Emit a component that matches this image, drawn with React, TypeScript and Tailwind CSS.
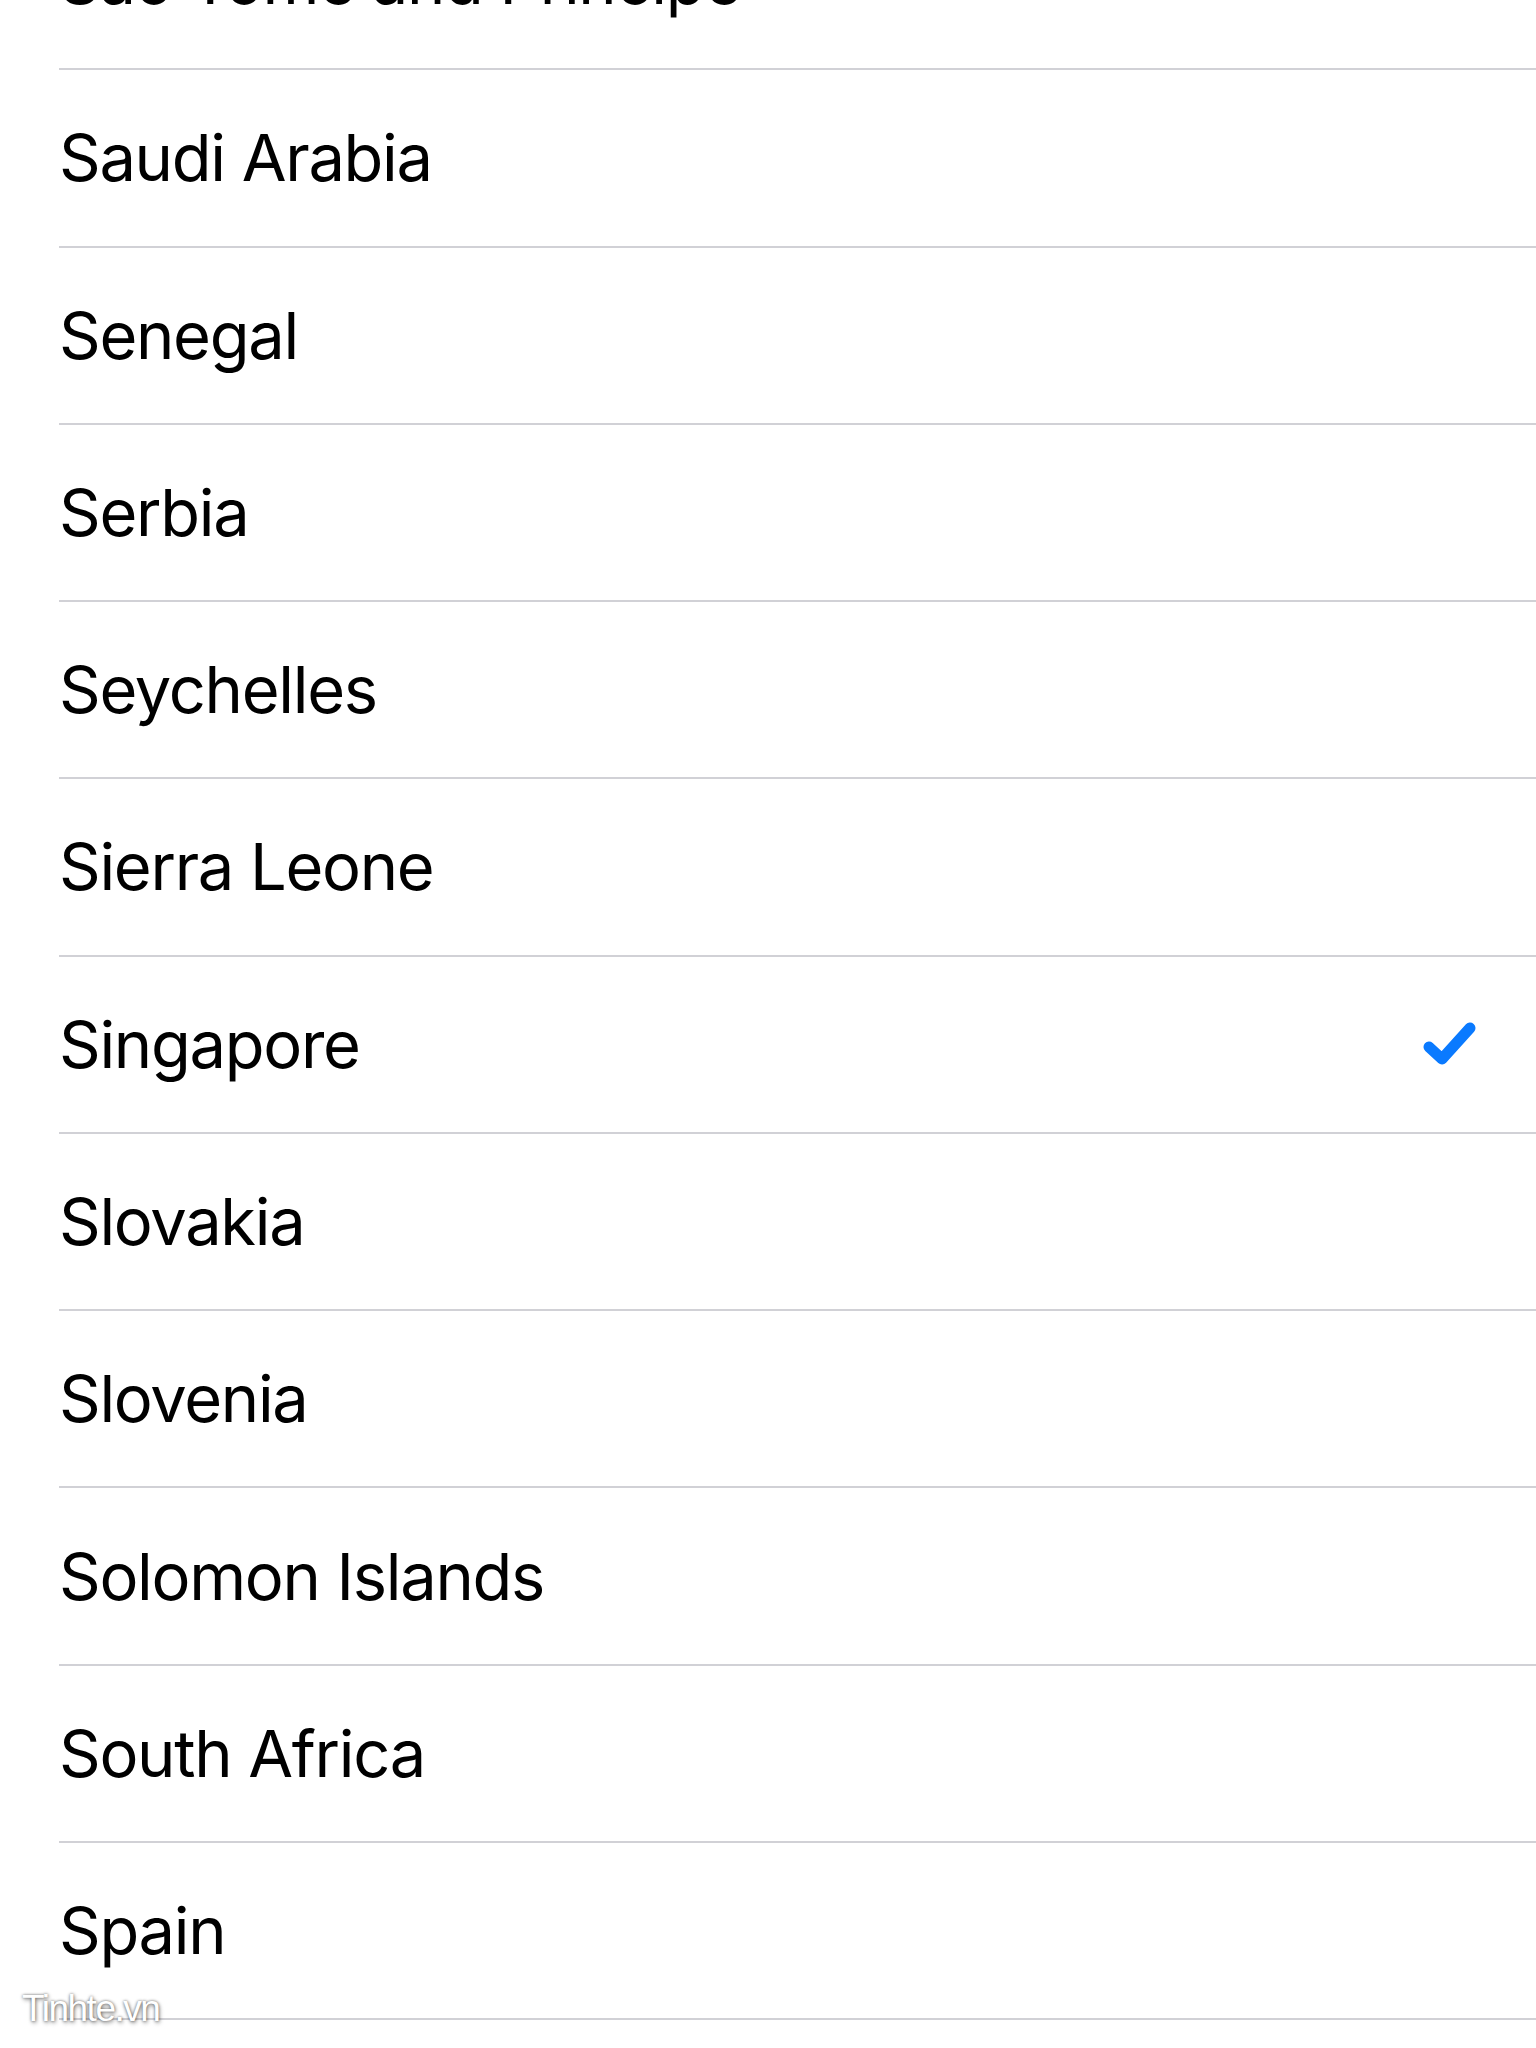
const countries = [
  "São Tomé and Príncipe",
  "Saudi Arabia",
  "Senegal",
  "Serbia",
  "Seychelles",
  "Sierra Leone",
  "Singapore",
  "Slovakia",
  "Slovenia",
  "Solomon Islands",
  "South Africa",
  "Spain",
];

const selected = "Singapore";

function Check() {
  return (
    <svg width="56" height="48" viewBox="0 0 56 48" fill="none">
      <path
        d="M7 27 L20 39 L48 8"
        stroke="#0a7aff"
        strokeWidth="11"
        strokeLinecap="round"
        strokeLinejoin="round"
      />
    </svg>
  );
}

export default function App() {
  return (
    <div className="relative h-[2048px] w-full overflow-hidden bg-white font-['Inter',sans-serif]">
      {/* Country list */}
      <ul className="-mt-[107px] pl-[59px]">
        {countries.map((name) => (
          <li
            key={name}
            className="flex h-[177.27px] items-center justify-between border-b-2 border-[#d1d1d6] pr-[58px]"
          >
            <span className="text-[65px] leading-none tracking-[-1.3px] text-black">{name}</span>
            {name === selected && <Check />}
          </li>
        ))}
      </ul>

      {/* Watermark */}
      <div className="absolute left-[22px] top-[1981px] text-[37px] tracking-[-1.5px] text-white [text-shadow:0_0_3px_rgba(0,0,0,0.55),1px_2px_4px_rgba(0,0,0,0.4)] font-['Liberation_Sans',sans-serif]">
        Tinhte.vn
      </div>
    </div>
  );
}
